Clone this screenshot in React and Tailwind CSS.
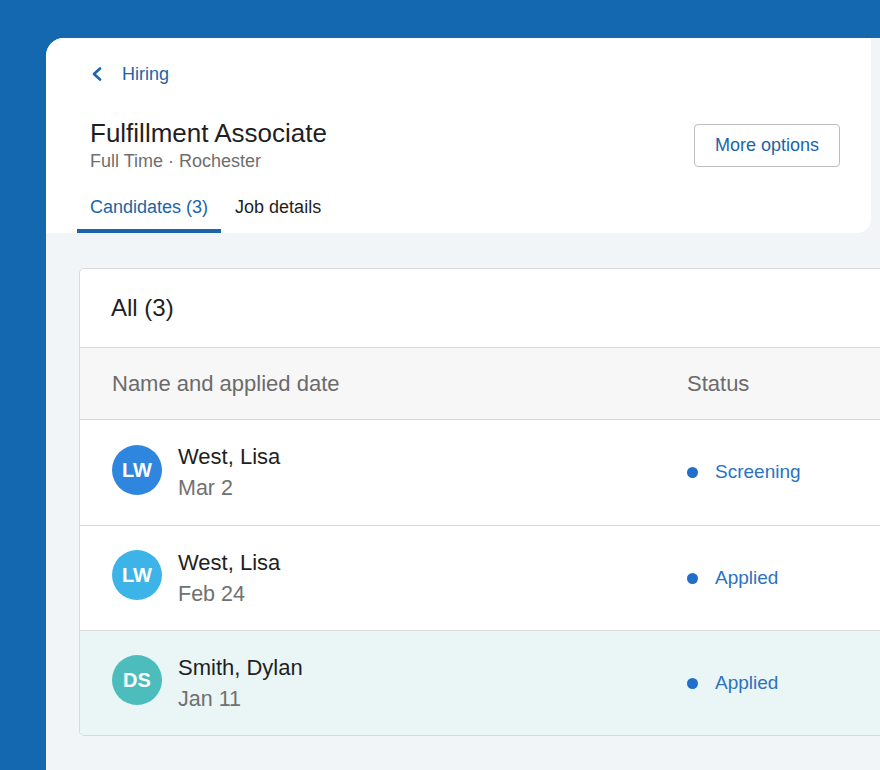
import React from "react";

const candidates = [
  { initials: "LW", name: "West, Lisa", date: "Mar 2", status: "Screening", color: "bg-[#2f86de]", rowBg: "bg-white" },
  { initials: "LW", name: "West, Lisa", date: "Feb 24", status: "Applied", color: "bg-[#3db4e7]", rowBg: "bg-white" },
  { initials: "DS", name: "Smith, Dylan", date: "Jan 11", status: "Applied", color: "bg-[#4cbcbc]", rowBg: "bg-[#eaf5f6]" },
];

export default function App() {
  return (
    <div className="w-[880px] h-[770px] bg-[#1468b0] pt-[38px] pl-[46px] overflow-hidden font-['Liberation_Sans',Arial,sans-serif]">
      <div className="h-[732px] bg-[#f1f5f8] rounded-tl-[18px] overflow-hidden">
        {/* header */}
        <div className="w-[825px] bg-white rounded-br-[14px] pl-[44px] pr-[31px] pt-[24px]">
          <div className="flex items-center h-[24px] text-[#1b64a9]">
            <svg width="12" height="14" viewBox="0 0 12 14" className="ml-[1px]">
              <path d="M9 1.5 L3 7 L9 12.5" fill="none" stroke="currentColor" strokeWidth="2.6" strokeLinecap="round" strokeLinejoin="round" />
            </svg>
            <span className="ml-[19px] text-[18px]">Hiring</span>
          </div>

          <div className="flex items-start justify-between mt-[32px]">
            <div>
              <div className="text-[26px] leading-[30px] text-[#1f1f1f]">Fulfillment Associate</div>
              <div className="text-[18px] leading-[22px] mt-[2px] text-[#6e6e6e]">Full Time · Rochester</div>
            </div>
            <button className="mt-[6px] w-[146px] h-[43px] border border-[#bdbdbd] rounded-[4px] text-[18px] text-[#1b64a9] bg-white">
              More options
            </button>
          </div>

          <div className="flex ml-[-13px] mt-[24px] text-[18px] leading-[22px]">
            <div className="px-[13px] pb-[11px] border-b-4 border-[#1b64a9] text-[#1b64a9]">Candidates (3)</div>
            <div className="px-[14px] pb-[11px] border-b-4 border-transparent text-[#1f1f1f]">Job details</div>
          </div>
        </div>

        {/* table */}
        <div className="ml-[33px] mt-[35px] w-[830px] bg-white border border-[#d9d9d9] rounded-l-[5px] overflow-hidden">
          <div className="h-[78px] flex items-center pl-[31px] text-[24px] text-[#1f1f1f]">All (3)</div>
          <div className="h-[73px] flex items-center bg-[#f7f7f7] border-y border-[#dadada] text-[22px] text-[#6b6b6b]">
            <div className="pl-[32px] w-[607px]">Name and applied date</div>
            <div>Status</div>
          </div>
          {candidates.map((c, i) => (
            <div
              key={i}
              className={`h-[105px] flex items-center ${c.rowBg} ${i > 0 ? "border-t border-[#dadada]" : ""}`}
            >
              <div className="pl-[32px] w-[607px] flex items-center">
                <div className={`w-[50px] h-[50px] mb-[6px] rounded-full ${c.color} flex items-center justify-center text-white text-[20px] font-bold`}>
                  {c.initials}
                </div>
                <div className="ml-[16px]">
                  <div className="text-[22px] leading-[26px] text-[#1f1f1f]">{c.name}</div>
                  <div className="text-[21.5px] leading-[26px] mt-[5px] text-[#707070]">{c.date}</div>
                </div>
              </div>
              <div className="flex items-center">
                <span className="w-[11px] h-[11px] rounded-full bg-[#1f6fcb]" />
                <span className="ml-[17px] text-[19px] text-[#2a72c2]">{c.status}</span>
              </div>
            </div>
          ))}
        </div>
      </div>
    </div>
  );
}
